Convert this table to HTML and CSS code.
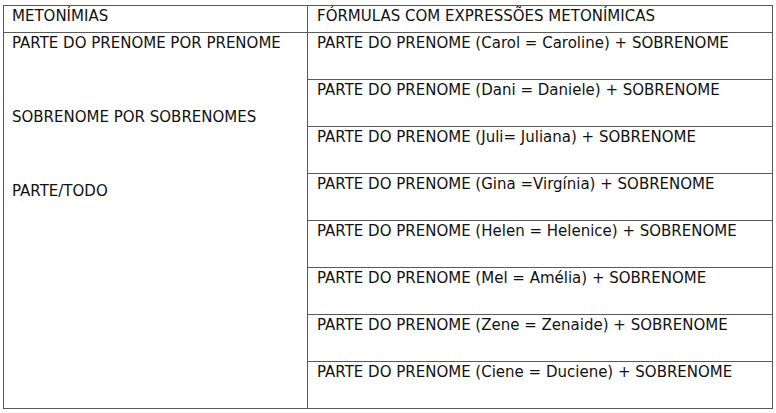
FILE: index.html
```html
<!DOCTYPE html>
<html lang="pt">
<head>
<meta charset="utf-8">
<link rel="stylesheet" href="styles.css">
</head>
<body>
<table class="metonimias">
  <thead>
    <tr class="head-row">
      <th class="col-left">METONÍMIAS</th>
      <th class="col-right">FÓRMULAS COM EXPRESSÕES METONÍMICAS</th>
    </tr>
  </thead>
  <tbody>
    <tr class="body-row">
      <td class="col-left" rowspan="8">
        <p class="item">PARTE DO PRENOME POR PRENOME</p>
        <p class="item">SOBRENOME POR SOBRENOMES</p>
        <p class="item">PARTE/TODO</p>
      </td>
      <td class="col-right">PARTE DO PRENOME (Carol = Caroline) + SOBRENOME</td>
    </tr>
    <tr class="body-row"><td class="col-right">PARTE DO PRENOME (Dani = Daniele) + SOBRENOME</td></tr>
    <tr class="body-row"><td class="col-right">PARTE DO PRENOME (Juli= Juliana) + SOBRENOME</td></tr>
    <tr class="body-row"><td class="col-right">PARTE DO PRENOME (Gina =Virgínia) + SOBRENOME</td></tr>
    <tr class="body-row"><td class="col-right">PARTE DO PRENOME (Helen = Helenice) + SOBRENOME</td></tr>
    <tr class="body-row"><td class="col-right">PARTE DO PRENOME (Mel = Amélia) + SOBRENOME</td></tr>
    <tr class="body-row"><td class="col-right">PARTE DO PRENOME (Zene = Zenaide) + SOBRENOME</td></tr>
    <tr class="body-row"><td class="col-right">PARTE DO PRENOME (Ciene = Duciene) + SOBRENOME</td></tr>
  </tbody>
</table>
</body>
</html>
```
FILE: styles.css
```css
html, body {
  margin: 0;
  padding: 0;
  background: #ffffff;
}
body {
  padding: 5px 0 0 3px;
  font-family: "DejaVu Sans", Verdana, sans-serif;
  font-size: 15px;
  color: #111111;
}
.metonimias {
  border-collapse: collapse;
  width: 770px;
  table-layout: fixed;
}
.metonimias th,
.metonimias td {
  border: 1px solid #5a5a5a;
  vertical-align: top;
  text-align: left;
  font-weight: normal;
  padding: 2px 8px 0 8px;
  line-height: 17px;
  white-space: nowrap;
}
.metonimias .col-right {
  padding-left: 9px;
}
.col-left {
  width: 287px;
}
.head-row th {
  height: 24px;
}
.body-row td {
  height: 44px;
}
.item {
  margin: 0 0 57px 0;
}
.item:last-child {
  margin-bottom: 0;
}
```
